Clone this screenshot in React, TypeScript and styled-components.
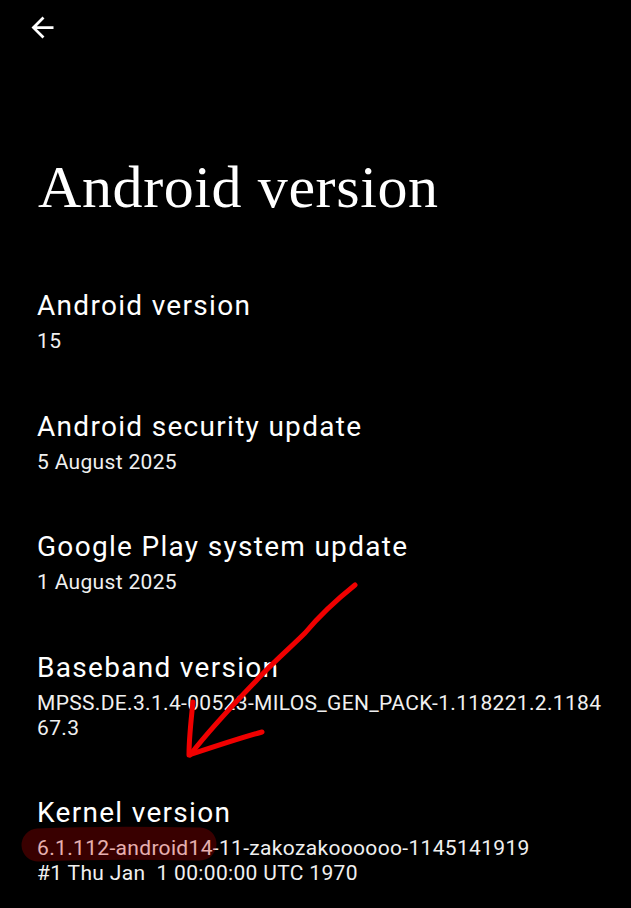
import React from "react";
import styled, { createGlobalStyle } from "styled-components";

const Global = createGlobalStyle`
  html, body { margin: 0; padding: 0; background: #000; }
  body { font-family: Roboto, "Noto Sans", sans-serif; }
`;

const Page = styled.div`
  position: relative;
  width: 631px;
  height: 908px;
  overflow: hidden;
  background: #000;
  color: #fff;
`;

const Header = styled.header`
  height: 56px;
  display: flex;
  align-items: flex-start;
  padding: 11px 0 0 26px;
  box-sizing: border-box;
`;

const BackButton = styled.button`
  background: none;
  border: none;
  padding: 0;
  width: 33px;
  height: 33px;
  color: #fff;
  display: flex;
`;

const Title = styled.h1`
  margin: 95px 0 0 0;
  padding-left: 38px;
  font-family: "Liberation Serif", "DejaVu Serif", serif;
  font-weight: 400;
  font-size: 60px;
  line-height: 72px;
  letter-spacing: 0.6px;
  color: #fff;
`;

const List = styled.div`
  margin-top: 39px;
  display: flex;
  flex-direction: column;
`;

const Item = styled.div`
  padding: 27px 24px 28.5px 37px;
  display: flex;
  flex-direction: column;
  gap: 6px;
`;

const ItemTitle = styled.div`
  font-size: 28px;
  line-height: 34px;
  letter-spacing: 1.3px;
  color: #fff;
`;

const ItemValue = styled.div`
  font-size: 21px;
  line-height: 25px;
  letter-spacing: 0.33px;
  color: #f0f0f0;
  word-break: break-all;
  white-space: pre-wrap;
`;

const Overlay = styled.svg`
  position: absolute;
  left: 0;
  top: 0;
  pointer-events: none;
`;

const items: { title: string; value: string }[] = [
  { title: "Android version", value: "15" },
  { title: "Android security update", value: "5 August 2025" },
  { title: "Google Play system update", value: "1 August 2025" },
  { title: "Baseband version", value: "MPSS.DE.3.1.4-00523-MILOS_GEN_PACK-1.118221.2.118467.3" },
  { title: "Kernel version", value: "6.1.112-android14-11-zakozakoooooo-1145141919\n#1 Thu Jan  1 00:00:00 UTC 1970" },
];

export default function App() {
  return (
    <Page>
      <Global />
      <Header>
        <BackButton aria-label="Back">
          <svg width="33" height="33" viewBox="0 0 24 24" fill="currentColor">
            <path d="M20 11H7.83l5.59-5.59L12 4l-8 8 8 8 1.41-1.41L7.83 13H20v-2z" />
          </svg>
        </BackButton>
      </Header>
      <Title>Android version</Title>
      <List>
        {items.map((it) => (
          <Item key={it.title}>
            <ItemTitle>{it.title}</ItemTitle>
            <ItemValue>{it.value}</ItemValue>
          </Item>
        ))}
      </List>
      <Overlay width="631" height="908" viewBox="0 0 631 908">
        <path
          d="M38 845 C 80 843, 150 843, 200 844"
          stroke="rgba(210,0,0,0.27)"
          strokeWidth="33"
          strokeLinecap="round"
          fill="none"
        />
        <g stroke="#f00000" strokeWidth="5" strokeLinecap="round" strokeLinejoin="round" fill="none">
          <path d="M355 585 C 340 597, 320 615, 305 633 C 290 648, 270 665, 255 682 C 230 708, 208 732, 190 755" />
          <path d="M193 702 C 191 720, 189 740, 189 755 C 210 748, 240 738, 262 732" />
        </g>
      </Overlay>
    </Page>
  );
}
